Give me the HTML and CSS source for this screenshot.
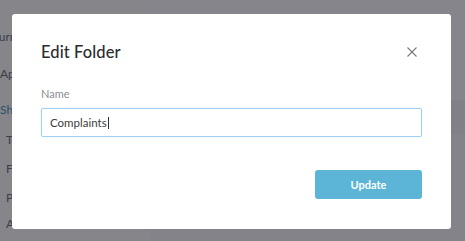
FILE: index.html
```html
<!DOCTYPE html>
<html lang="en">
<head>
<meta charset="utf-8">
<title>Edit Folder</title>
<link rel="stylesheet" href="styles.css">
</head>
<body>
<div class="page">
  <nav class="sidebar">
    <div class="nav-item top first"><span class="clip">Return</span></div>
    <div class="nav-item top">Apps</div>
    <div class="nav-item top active">Shared</div>
    <div class="nav-item sub">Templates</div>
    <div class="nav-item sub">Forms</div>
    <div class="nav-item sub">Plans</div>
    <div class="nav-item sub last">Archive</div>
  </nav>
  <main class="content">
    <div class="content-head"></div>
    <div class="content-row"></div>
    <div class="content-rest"></div>
  </main>
</div>
<div class="overlay"></div>
<div class="modal" role="dialog" aria-label="Edit Folder">
  <header class="modal-head">
    <h2 class="modal-title">Edit Folder</h2>
    <button class="close" aria-label="Close">
      <svg width="10" height="10" viewBox="0 0 10 10"><path d="M0.5 0.5 L9.5 9.5 M9.5 0.5 L0.5 9.5" stroke="#7a7a7a" stroke-width="1.1" fill="none"/></svg>
    </button>
  </header>
  <div class="field-label">Name</div>
  <div class="field"><span class="field-text">Complaints</span><span class="caret"></span></div>
  <footer class="modal-foot">
    <button class="btn">Update</button>
  </footer>
</div>
</body>
</html>
```
FILE: styles.css
```css
html, body {
  margin: 0;
  padding: 0;
}
body {
  width: 465px;
  height: 241px;
  overflow: hidden;
  font-family: Lato, "Open Sans", sans-serif;
  background: #f6f6f9;
  position: relative;
}
.page {
  display: flex;
  height: 241px;
}
.sidebar {
  width: 150px;
  padding-top: 30px;
  box-sizing: border-box;
  font-size: 12px;
  line-height: 14px;
  color: #6a6a70;
}
.nav-item {
  white-space: nowrap;
  overflow: hidden;
}
.nav-item.top {
  height: 36px;
}
.nav-item.first {
  height: 37px;
}
.clip {
  display: inline-block;
  margin-left: -19px;
}
.nav-item.active {
  color: #3f8fb5;
  height: 30px;
}
.nav-item.sub {
  height: 29px;
  padding-left: 6px;
}
.nav-item.last {
  margin-top: -3px;
}
.content {
  flex: 1;
  display: flex;
  flex-direction: column;
}
.content-head {
  height: 100px;
  background: #f7f7fa;
}
.content-row {
  height: 34px;
  background: #ececf0;
}
.content-rest {
  flex: 1;
  background: #f3f3f6;
}
.overlay {
  position: absolute;
  inset: 0;
  background: rgba(20, 20, 28, 0.5);
}
.modal {
  position: absolute;
  left: 12px;
  top: 14px;
  width: 439px;
  height: 215px;
  box-sizing: border-box;
  background: #ffffff;
  border-radius: 3px;
  padding: 28px 29px 30px 29px;
  display: flex;
  flex-direction: column;
}
.modal-head {
  display: flex;
  align-items: center;
  justify-content: space-between;
}
.modal-title {
  margin: 0;
  font-size: 16.5px;
  line-height: 20px;
  font-weight: 500;
  color: #2c2c30;
  letter-spacing: 0.1px;
}
.close {
  border: 0;
  background: none;
  padding: 0;
  margin-right: 5px;
  width: 10px;
  height: 10px;
  display: flex;
}
.field-label {
  margin-top: 25px;
  font-size: 11px;
  line-height: 14px;
  color: #8d8d92;
}
.field {
  margin-top: 7px;
  height: 29px;
  box-sizing: border-box;
  border: 1px solid #9fd0f1;
  border-radius: 2px;
  box-shadow: 0 0 1px rgba(120, 190, 240, 0.5);
  padding-left: 8px;
  display: flex;
  align-items: center;
  font-size: 11.5px;
  color: #3c3c40;
}
.caret {
  width: 1px;
  height: 12px;
  background: #333;
  margin-left: 1px;
}
.modal-foot {
  margin-top: 33px;
  display: flex;
  justify-content: flex-end;
}
.btn {
  width: 107px;
  height: 29px;
  border: 0;
  border-radius: 3px;
  background: #5cb5d7;
  color: #ffffff;
  font-family: Lato, "Open Sans", sans-serif;
  font-weight: 700;
  font-size: 11px;
}
```
